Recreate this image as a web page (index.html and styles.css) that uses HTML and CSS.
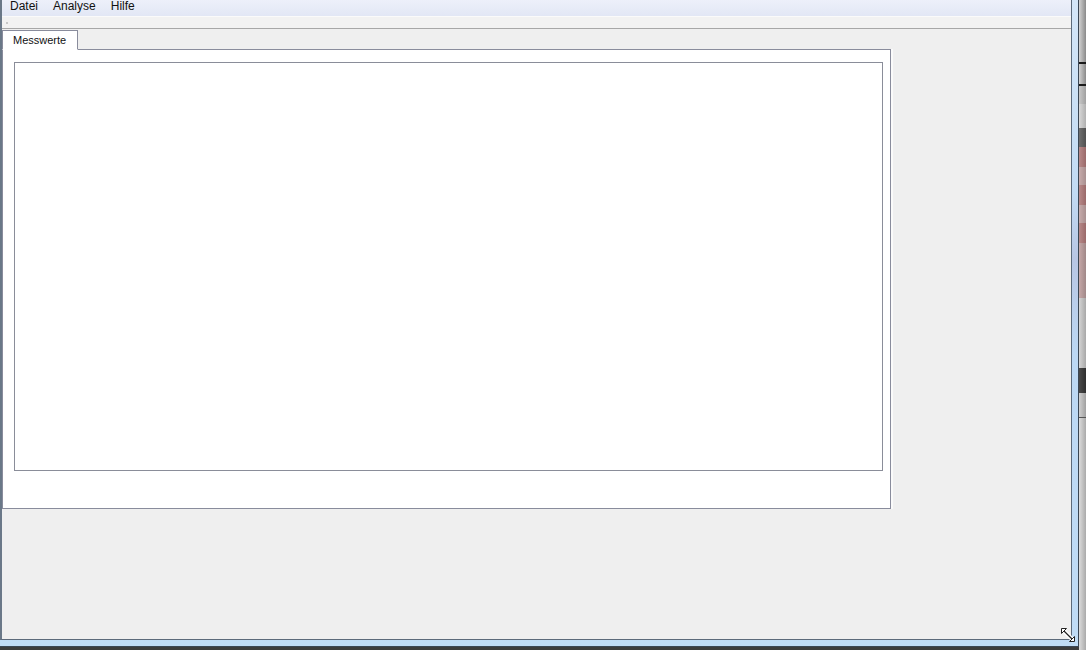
FILE: index.html
```html
<!DOCTYPE html>
<html>
<head>
<meta charset="utf-8">
<link rel="stylesheet" href="styles.css">
</head>
<body>
<div class="screen">
  <div class="frame">
    <div class="client">
      <div class="menubar">
        <span class="menu-item">Datei</span>
        <span class="menu-item">Analyse</span>
        <span class="menu-item">Hilfe</span>
      </div>
      <div class="toolbar"><span class="grip"></span></div>
      <div class="workspace">
        <div class="tabs">
          <div class="tab">Messwerte</div>
        </div>
        <div class="panel">
          <div class="canvas"></div>
        </div>
      </div>
    </div>
    <svg class="resize" width="16" height="16" viewBox="0 0 16 16">
      <path d="M2 2 L14 14" stroke="#fff" stroke-width="4"/>
      <path d="M2 2 L14 14" stroke="#222" stroke-width="1.2"/>
      <path d="M1.5 1.5 L6.5 1.5 L1.5 6.5 Z" fill="#fff" stroke="#222" stroke-width="1"/>
      <path d="M14.5 14.5 L9.5 14.5 L14.5 9.5 Z" fill="#fff" stroke="#222" stroke-width="1"/>
    </svg>
  </div>
  <div class="strip">
    <div class="s s1"></div>
    <div class="s sline"></div>
    <div class="s s2"></div>
    <div class="s sline"></div>
    <div class="s s3"></div>
    <div class="s s4"></div>
    <div class="s sdark"></div>
    <div class="s sred"></div>
    <div class="s spink"></div>
    <div class="s sred"></div>
    <div class="s spink"></div>
    <div class="s sred"></div>
    <div class="s spink2"></div>
    <div class="s s5"></div>
    <div class="s sdark2"></div>
    <div class="s s6"></div>
    <div class="s sline2"></div>
    <div class="s s7"></div>
  </div>
</div>
</body>
</html>
```
FILE: styles.css
```css
html, body {
  margin: 0;
  padding: 0;
  background: #3c3c3c;
}
.screen {
  display: flex;
  width: 1086px;
  height: 650px;
  overflow: hidden;
  font-family: "Liberation Sans", Arial, sans-serif;
}
.frame {
  position: relative;
  width: 1079px;
  height: 647px;
  box-sizing: border-box;
  padding: 0 6px 6px 0;
  background: linear-gradient(180deg, #d4e6f8 0%, #c2dbf4 30%, #b8c6e4 40%, #bcd8f4 55%, #c0dcf6 100%);
  border-right: 1px solid #3a4654;
  border-bottom: 1px solid #3a4654;
  flex: none;
}
.client {
  height: 100%;
  box-sizing: border-box;
  border-left: 2px solid #6a7888;
  border-right: 1px solid #5c6a7a;
  border-bottom: 1px solid #5c6a7a;
  background: #efefef;
  display: flex;
  flex-direction: column;
}
.menubar {
  height: 16px;
  display: flex;
  align-items: flex-start;
  background: linear-gradient(180deg, #edf0fa 0%, #e2e7f5 100%);
  padding-left: 8px;
  box-sizing: border-box;
}
.menu-item {
  font-size: 12px;
  line-height: 13px;
  color: #111;
  margin-right: 15px;
}
.toolbar {
  height: 11px;
  background: #f2f2f2;
  border-top: 1px solid #fafafa;
  border-bottom: 1px solid #a7a7a7;
  box-sizing: content-box;
  display: flex;
  align-items: center;
  padding-left: 4px;
}
.grip {
  width: 2px;
  height: 2px;
  background: #c8c8c8;
  margin-top: 1px;
}
.workspace {
  padding-top: 1px;
  display: flex;
  flex-direction: column;
  align-items: flex-start;
}
.tabs {
  display: flex;
  position: relative;
  z-index: 1;
  margin-bottom: -1px;
}
.tab {
  width: 74px;
  height: 18px;
  box-sizing: content-box;
  background: #fff;
  border: 1px solid #898c9c;
  border-bottom: 1px solid #fff;
  font-size: 11px;
  line-height: 18px;
  text-indent: 10px;
  color: #111;
}
.panel {
  width: 889px;
  height: 460px;
  box-sizing: border-box;
  border: 1px solid #898c9c;
  background: #fff;
  padding: 12px 7px 37px 11px;
  box-shadow: 2px 0 0 #fafafa;
}
.canvas {
  width: 100%;
  height: 100%;
  box-sizing: border-box;
  border: 1px solid #8a8d99;
  background: #fff;
}
.resize {
  position: absolute;
  right: 2px;
  bottom: 3px;
}
.strip {
  width: 7px;
  height: 650px;
  display: flex;
  flex-direction: column;
  flex: none;
}
.s { width: 100%; background: linear-gradient(90deg, #d2d2d2, #8a8a8a); }
.s1 { height: 62px; }
.sline { height: 2px; background: #1a1a1a; }
.s2 { height: 20px; }
.s3 { height: 18px; background: linear-gradient(90deg, #c8c8c8, #a0a0a0); }
.s4 { height: 24px; background: linear-gradient(90deg, #d8d8d8, #b0b0b0); }
.sdark { height: 19px; background: linear-gradient(90deg, #707070, #505050); }
.sred { height: 20px; background: linear-gradient(90deg, #b88a8a, #9a6a6a); }
.spink { height: 18px; background: linear-gradient(90deg, #c8acac, #a89090); }
.spink2 { height: 55px; background: linear-gradient(90deg, #c6a8a8, #a08888); }
.s5 { height: 70px; background: linear-gradient(90deg, #d4d4d4, #a8a8a8); }
.sdark2 { height: 25px; background: linear-gradient(90deg, #4a4a4a, #2e2e2e); }
.s6 { height: 24px; background: linear-gradient(90deg, #d0d0d0, #a0a0a0); }
.sline2 { height: 1px; background: #555; }
.s7 { flex: 1; background: linear-gradient(90deg, #dcdcdc, #aaaaaa); }
```
